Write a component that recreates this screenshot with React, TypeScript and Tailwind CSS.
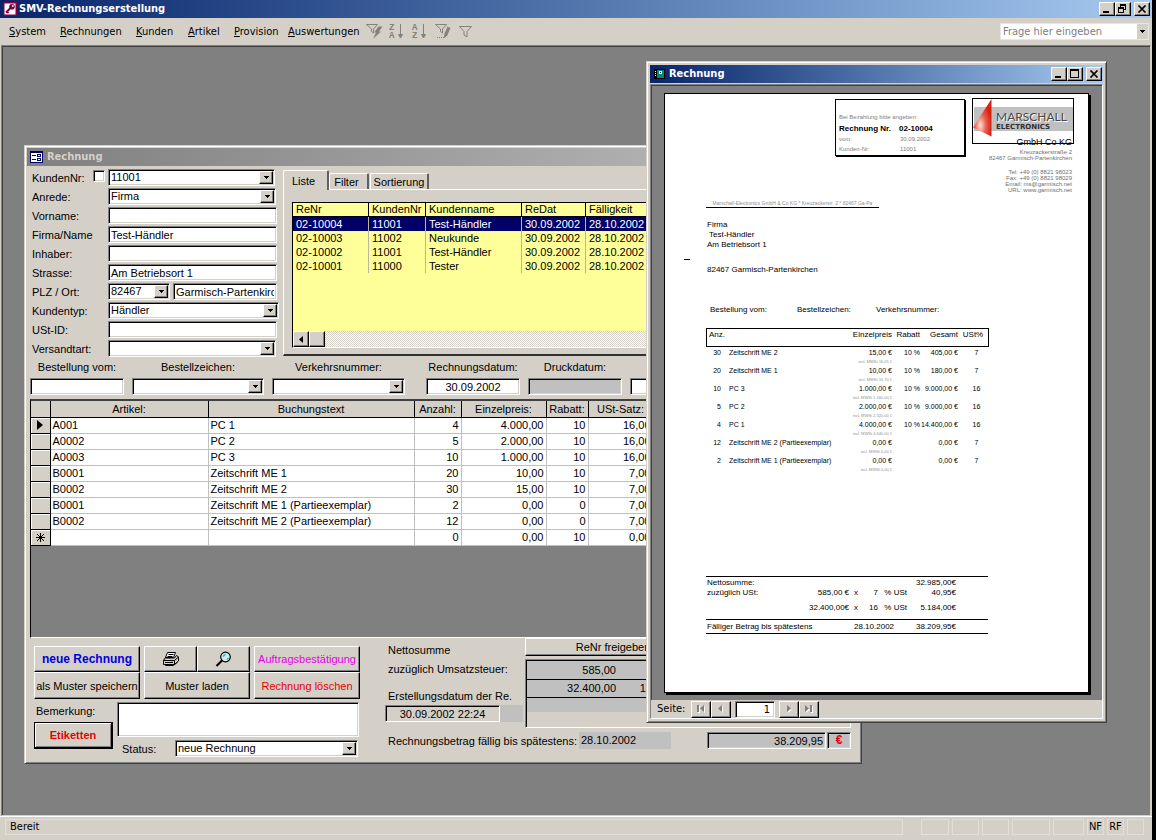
import React from 'react';

const UI = "font-['DejaVu_Sans_Condensed','DejaVu_Sans',sans-serif]";
const SUNKEN =
  'border border-t-[#808080] border-l-[#808080] border-b-white border-r-white shadow-[inset_1px_1px_0_#000,inset_-1px_-1px_0_#d4d0c8]';
const RAISED =
  'border border-t-white border-l-white border-b-black border-r-black bg-[#d4d0c8] shadow-[inset_-1px_-1px_0_#808080]';
const FRAME =
  'border border-t-[#d4d0c8] border-l-[#d4d0c8] border-b-[#404040] border-r-[#404040] bg-[#d4d0c8] shadow-[inset_1px_1px_0_#fff,inset_-1px_-1px_0_#808080]';

function Arrow() {
  return (
    <svg width="5" height="3" viewBox="0 0 5 3" shapeRendering="crispEdges" aria-hidden="true">
      <path d="M0 0h5v1H4v1H3v1H2V2H1V1H0z" fill="#000" />
    </svg>
  );
}

function TextField({ label, value = '', className = '', bg = 'bg-white' }: { label: string; value?: string; className?: string; bg?: string }) {
  return (
    <input
      aria-label={label}
      defaultValue={value}
      className={`block h-[17px] min-w-0 rounded-none px-[2px] text-[11px] leading-[15px] outline-none ${SUNKEN} ${bg} ${className}`}
    />
  );
}

function Combo({ label, value = '', className = '' }: { label: string; value?: string; className?: string }) {
  return (
    <div className={`relative h-[17px] bg-white p-px ${SUNKEN} ${className}`}>
      <select
        aria-label={label}
        defaultValue={value}
        className="block h-[13px] w-full appearance-none bg-transparent pl-px text-[11px] leading-[13px] outline-none"
      >
        <option value={value}>{value}</option>
      </select>
      <span className={`pointer-events-none absolute top-px right-px flex h-[13px] w-[14px] items-center justify-center ${RAISED}`}>
        <Arrow />
      </span>
    </div>
  );
}

function Field({ label, children }: { label: string; children: React.ReactNode }) {
  return (
    <div className="flex h-[17px] items-center">
      <span className="w-[76px] shrink-0">{label}</span>
      {children}
    </div>
  );
}

function WindowButtons({ middle }: { middle: 'restore' | 'max' }) {
  const cls = `flex h-[14px] w-4 items-center justify-center ${RAISED}`;
  return (
    <div className="flex items-center">
      <button aria-label="Minimieren" className={cls}>
        <svg width="12" height="10" viewBox="0 0 12 10" shapeRendering="crispEdges"><path d="M2 7h6v2H2z" /></svg>
      </button>
      <button aria-label={middle === 'max' ? 'Maximieren' : 'Wiederherstellen'} className={cls}>
        {middle === 'max' ? (
          <svg width="12" height="10" viewBox="0 0 12 10" shapeRendering="crispEdges">
            <path d="M1 0h9v9H1zM2 2v6h7V2z" fillRule="evenodd" />
          </svg>
        ) : (
          <svg width="12" height="10" viewBox="0 0 12 10" shapeRendering="crispEdges">
            <path d="M3 0h6v6H7V5h1V2H4v1H3zM1 3h6v6H1zM2 5v3h4V5z" fillRule="evenodd" />
          </svg>
        )}
      </button>
      <button aria-label="Schließen" className={`ml-[3px] ${cls}`}>
        <svg width="10" height="8" viewBox="0 0 10 8"><path d="M1.5 .5l7 7M8.5 .5l-7 7" stroke="#000" strokeWidth="1.7" /></svg>
      </button>
    </div>
  );
}

const MENU = [
  { name: 'System', w: 'w-[51px]' },
  { name: 'Rechnungen', w: 'w-[76px]' },
  { name: 'Kunden', w: 'w-[52px]' },
  { name: 'Artikel', w: 'w-[46px]' },
  { name: 'Provision', w: 'w-[54px]' },
  { name: 'Auswertungen', w: 'w-[78px]' },
];

function SortIcon({ top, bottom }: { top: string; bottom: string }) {
  return (
    <svg className="block" width="17" height="19" viewBox="0 0 17 19" aria-hidden="true">
      <text x="0" y="8" fontSize="9" fontWeight="bold" fontFamily="Liberation Mono, monospace" fill="#85827b">{top}</text>
      <text x="0" y="16" fontSize="9" fontWeight="bold" fontFamily="Liberation Mono, monospace" fill="#85827b">{bottom}</text>
      <path d="M11.500 2v10M9.500 12.500l2 3.500 2-3.500z" stroke="#85827b" fill="#85827b" />
    </svg>
  );
}

function MenuBar() {
  return (
    <div className={`flex h-[27px] items-center bg-[#d4d0c8] pr-[3px] pl-[9px] ${UI}`}>
      <nav className="flex">
        {MENU.map((m) => (
          <button key={m.name} className={`text-left whitespace-nowrap ${m.w}`}>
            <span className="underline underline-offset-1">{m.name[0]}</span>
            {m.name.slice(1)}
          </button>
        ))}
      </nav>
      <div className="flex items-center gap-[6px]">
        <button aria-label="Auswahlbasierter Filter">
          <svg width="17" height="17" viewBox="0 0 17 17">
            <path d="M.5 1.500h11l-4 4.500v4l-2-1.500V6z" fill="none" stroke="#85827b" />
            <path d="M12.500 3.500L8 9.500h2L7 16l8-7.500h-2l3.500-5z" fill="#85827b" />
          </svg>
        </button>
        <button aria-label="Absteigend sortieren"><SortIcon top="Z" bottom="A" /></button>
        <button aria-label="Aufsteigend sortieren"><SortIcon top="A" bottom="Z" /></button>
        <button aria-label="Formularbasierter Filter">
          <svg width="17" height="17" viewBox="0 0 17 17">
            <path d="M.5 1.500h11l-4 4.500v4l-2-1.500V6z" fill="none" stroke="#85827b" />
            <path d="M12.500 3.500l3 1.500-3.500 8-3 2 .2-3.500z" fill="#85827b" />
            <path d="M2 14.500h7" stroke="#85827b" strokeDasharray="1 1" />
          </svg>
        </button>
        <button aria-label="Filter anwenden">
          <svg width="16" height="17" viewBox="0 0 16 17">
            <path d="M1.500 3.500h12l-4.500 5v5.500l-3-2V8.500z" fill="none" stroke="#85827b" />
          </svg>
        </button>
      </div>
      <div className="ml-auto flex h-[17px] w-[149px] border border-[#e8e6e0] bg-white">
        <input
          aria-label="Frage hier eingeben"
          placeholder="Frage hier eingeben"
          className="w-[136px] min-w-0 bg-white px-[2px] text-[11px] outline-none placeholder:text-[#808080]"
        />
        <button aria-label="Fragen anzeigen" className="flex flex-1 items-center justify-center bg-[#d4d0c8]"><Arrow /></button>
      </div>
    </div>
  );
}

const LIST_ROWS = [
  ['02-10004', '11001', 'Test-Händler', '30.09.2002', '28.10.2002'],
  ['02-10003', '11002', 'Neukunde', '30.09.2002', '28.10.2002'],
  ['02-10002', '11001', 'Test-Händler', '30.09.2002', '28.10.2002'],
  ['02-10001', '11000', 'Tester', '30.09.2002', '28.10.2002'],
];

function InvoiceList() {
  return (
    <div className="flex h-[146px] flex-col border border-t-black border-l-black border-b-white border-r-white bg-[#ffff99]">
      <table className="w-full table-fixed border-separate border-spacing-0 text-[11px]">
        <colgroup>
          <col className="w-[76px]" /><col className="w-[57px]" /><col className="w-[96px]" /><col className="w-[64px]" /><col />
        </colgroup>
        <thead>
          <tr className="h-[14px]">
            {['ReNr', 'KundenNr', 'Kundenname', 'ReDat', 'Fälligkeit'].map((h) => (
              <th key={h} className="border-r border-b border-black p-0 pl-[3px] text-left leading-[13px] font-normal whitespace-nowrap last:border-r-0">{h}</th>
            ))}
          </tr>
        </thead>
        <tbody>
          {LIST_ROWS.map((r, i) => (
            <tr key={r[0]} className={i === 0 ? 'h-[14px] bg-[#000066] text-white' : 'h-[14px]'}>
              {r.map((c, j) => (
                <td key={j} className="border-r border-[#b8b8a0] p-0 pl-[3px] leading-[14px] last:border-r-0">{c}</td>
              ))}
            </tr>
          ))}
        </tbody>
      </table>
      <div className="mt-auto flex h-4 bg-[repeating-conic-gradient(#fff_0_25%,#d4d0c8_0_50%)] bg-[length:2px_2px]">
        <button aria-label="Nach links" className={`flex w-4 items-center justify-center ${RAISED}`}>
          <svg width="4" height="7" viewBox="0 0 4 7"><path d="M4 0v7L0 3.500z" /></svg>
        </button>
        <span className={`w-4 ${RAISED}`} />
      </div>
    </div>
  );
}

function TabPanel() {
  const tab = 'border-t border-l border-r-2 border-t-white border-l-white border-r-[#606060] bg-[#d4d0c8] rounded-t-[2px]';
  return (
    <div className="mt-px ml-1 flex min-w-0 flex-1 flex-col">
      <div className="flex items-end" role="tablist">
        <button role="tab" aria-selected="true" className={`relative z-10 -mb-px h-[20px] w-[46px] pr-1 ${tab}`}>Liste</button>
        <button role="tab" aria-selected="false" className={`h-[16px] w-[40px] pr-1 ${tab}`}>Filter</button>
        <button role="tab" aria-selected="false" className={`ml-px h-[16px] w-[59px] ${tab}`}>Sortierung</button>
      </div>
      <div className="border-t border-b-2 border-l border-t-white border-b-[#303030] border-l-white pt-[12px] pr-2 pb-[6px] pl-2">
        <InvoiceList />
      </div>
    </div>
  );
}

const ITEMS = [
  ['A001', 'PC 1', '4', '4.000,00', '10', '16,00'],
  ['A0002', 'PC 2', '5', '2.000,00', '10', '16,00'],
  ['A0003', 'PC 3', '10', '1.000,00', '10', '16,00'],
  ['B0001', 'Zeitschrift ME 1', '20', '10,00', '10', '7,00'],
  ['B0002', 'Zeitschrift ME 2', '30', '15,00', '10', '7,00'],
  ['B0001', 'Zeitschrift ME 1 (Partieexemplar)', '2', '0,00', '0', '7,00'],
  ['B0002', 'Zeitschrift ME 2 (Partieexemplar)', '12', '0,00', '0', '7,00'],
  ['', '', '0', '0,00', '10', '0,00'],
];

function ItemTable() {
  return (
    <div className="mx-[3px] mt-[4px] h-[239px] border-t-2 border-b border-l border-t-[#404040] border-b-white border-l-black bg-[#808080]">
      <table className="table-fixed border-collapse text-[11px] leading-[14px]">
        <colgroup>
          <col className="w-[19px]" /><col className="w-[158px]" /><col className="w-[206px]" /><col className="w-[47px]" />
          <col className="w-[85px]" /><col className="w-[42px]" /><col className="w-[65px]" />
        </colgroup>
        <thead>
          <tr className="h-[16px] bg-[#d4d0c8]">
            {['', 'Artikel:', 'Buchungstext', 'Anzahl:', 'Einzelpreis:', 'Rabatt:', 'USt-Satz:'].map((h, i) => (
              <th key={i} className="border-r border-b border-black p-0 text-center font-normal whitespace-nowrap">{h}</th>
            ))}
          </tr>
        </thead>
        <tbody>
          {ITEMS.map((r, i) => (
            <tr key={i} className="h-[16px] bg-white">
              <td className="border-r border-b border-black bg-[#d4d0c8] p-0 shadow-[inset_1px_1px_0_#fff]">
                <span className="flex items-center justify-center">
                  {i === 0 && <svg width="6" height="10" viewBox="0 0 6 10"><path d="M0 0v10L6 5z" /></svg>}
                  {i === ITEMS.length - 1 && (
                    <svg width="9" height="9" viewBox="0 0 9 9"><path d="M4.500 0v9M0 4.500h9M1 1l7 7M8 1L1 8" stroke="#000" /></svg>
                  )}
                </span>
              </td>
              {r.map((c, j) => (
                <td key={j} className={`border-r border-b border-[#c0c0c0] p-0 px-[2px] ${j > 1 ? 'text-right' : ''}`}>{c}</td>
              ))}
            </tr>
          ))}
        </tbody>
      </table>
    </div>
  );
}

function Captioned({ label, className, children }: { label: string; className: string; children: React.ReactNode }) {
  return (
    <div className={className}>
      <div className="h-[19px] text-center leading-[17px] whitespace-nowrap">{label}</div>
      {children}
    </div>
  );
}

function FormActions() {
  return (
    <div className="w-[326px] shrink-0">
      <div className="flex gap-1">
        <div className="flex w-[106px] flex-col">
          <button className={`h-[26px] text-[12px] font-bold text-[#0000dd] ${RAISED}`}>neue Rechnung</button>
          <button className={`h-[27px] whitespace-nowrap ${RAISED}`}>als Muster speichern</button>
        </div>
        <div className="flex w-[106px] flex-col">
          <div className="flex">
            <button aria-label="Drucken" className={`flex h-[26px] w-[53px] items-center justify-center ${RAISED}`}>
              <svg width="18" height="16" viewBox="0 0 18 16">
                <path d="M5.500 1.500h8l-2 5h-8z" fill="#fff" stroke="#000" />
                <path d="M6.500 3.500h5M5.500 5.500h5" stroke="#000" />
                <path d="M3.500 6.500l-2 3v4h11l4-3.500V6l-2-1.500-2 2.500h-9z" fill="#d4d0c8" stroke="#000" />
                <path d="M1.500 9.500h11v4M12.500 9.500l4-3.500M3 11.500h8M3.500 13.500v1h8l4-3.500" fill="none" stroke="#000" />
                <path d="M9 10.500h2" stroke="#cc0" />
              </svg>
            </button>
            <button aria-label="Seitenansicht" className={`flex h-[26px] w-[53px] items-center justify-center ${RAISED}`}>
              <svg width="17" height="16" viewBox="0 0 17 16">
                <circle cx="10.500" cy="6" r="4.800" fill="#d8e8e4" stroke="#000" strokeWidth="1.200" />
                <path d="M8 5.500l2.500-2.500M12 8.500l1.500-1.500" stroke="#0cc" strokeWidth="1.500" />
                <path d="M7 9.500L1.500 15" stroke="#000" strokeWidth="2.200" />
              </svg>
            </button>
          </div>
          <button className={`h-[27px] ${RAISED}`}>Muster laden</button>
        </div>
        <div className="flex w-[106px] flex-col">
          <button className={`h-[26px] whitespace-nowrap text-[#e800e8] ${RAISED}`}>Auftragsbestätigung</button>
          <button className={`h-[27px] whitespace-nowrap text-[#e80000] ${RAISED}`}>Rechnung löschen</button>
        </div>
      </div>
      <div className="mt-[3px] flex">
        <div className="w-[83px]">
          <label htmlFor="bemerkung" className="block h-5 pl-[2px] leading-[18px]">Bemerkung:</label>
          <button className="h-[27px] w-[79px] border border-r-2 border-b-2 border-black bg-[#d4d0c8] font-bold text-[#e80000] shadow-[inset_1px_1px_0_#fff,inset_-1px_-1px_0_#808080]">
            Etiketten
          </button>
        </div>
        <div className="flex-1">
          <textarea id="bemerkung" className={`block h-[35px] w-[242px] resize-none bg-white px-[2px] outline-none ${SUNKEN}`} />
          <div className="mt-[3px] flex items-center">
            <span className="w-[58px] pl-[5px]">Status:</span>
            <Combo label="Status" value="neue Rechnung" className="w-[183px]" />
          </div>
        </div>
      </div>
    </div>
  );
}

function Totals() {
  return (
    <div className="ml-[25px] flex-1 pr-[11px]">
      <div className="flex">
        <div className="w-[140px] pt-[3px] whitespace-nowrap">
          <div className="h-[19px] pl-[3px] leading-[19px]">Nettosumme</div>
          <div className="h-[19px] pl-[3px] leading-[19px]">zuzüglich Umsatzsteuer:</div>
          <div className="mt-2 h-[18px] pl-[3px] leading-[19px]">Erstellungsdatum der Re.</div>
          <div className="flex">
            <TextField label="Erstellungsdatum" value="30.09.2002 22:24" bg="bg-[#d4d0c8]" className="w-[115px] text-center" />
            <span className="w-[23px] bg-[#c0c0c0]" />
          </div>
        </div>
        <div className="min-w-0 flex-1">
          <button className={`block h-[18px] w-[176px] leading-[16px] ${RAISED}`}>ReNr freigeben</button>
          <div className={`mt-[3px] h-[69px] p-px ${SUNKEN}`}>
            <table className="w-full table-fixed border-collapse bg-[#c0c0c0]">
              <tbody>
                <tr className="h-[18px] border-b border-black">
                  <td className="w-[89px] p-0 text-right">585,00</td>
                  <td className="w-[36px] p-0 text-right">7</td>
                  <td className="p-0 pr-6 text-right">40,95</td>
                </tr>
                <tr className="h-[18px] border-b border-black">
                  <td className="p-0 text-right">32.400,00</td>
                  <td className="p-0 text-right">16</td>
                  <td className="p-0 pr-6 text-right">5.184,00</td>
                </tr>
                <tr className="h-[15px]"><td colSpan={3} className="p-0" /></tr>
              </tbody>
            </table>
          </div>
        </div>
      </div>
      <div className="mt-1 flex items-center">
        <span className="w-[194px] pl-[3px] whitespace-nowrap">Rechnungsbetrag fällig bis spätestens:</span>
        <span className="h-[17px] w-[92px] bg-[#c0c0c0] pl-[2px] leading-[17px]">28.10.2002</span>
        <TextField label="Rechnungsbetrag" value="38.209,95" bg="bg-[#c0c0c0]" className="ml-9 w-[119px] text-right" />
        <button aria-label="Euro" className={`ml-px h-[17px] w-[24px] bg-[#c0c0c0] text-[12px] leading-[15px] font-bold text-[#e80000] ${SUNKEN}`}>€</button>
      </div>
    </div>
  );
}

function FormWindow() {
  return (
    <section className={`absolute top-[99px] left-[22px] w-[838px] p-[2px] pb-[6px] ${FRAME}`}>
      <header className={`flex h-[18px] items-center bg-linear-to-r from-[#808080] to-[#c0c0c0] pl-[3px] font-bold text-[#d4d0c8] ${UI}`}>
        <svg width="13" height="12" viewBox="0 0 13 12" shapeRendering="crispEdges" aria-hidden="true">
          <path d="M0 0h13v12H0z" fill="#000060" /><path d="M1 2h11v9H1z" fill="#fff" />
          <path d="M2 4h4v1H2zM2 8h4v1H2zM7 3h4v3H7zM7 7h4v3H7z" fill="#000060" />
          <path d="M8 4h2v1H8zM8 8h2v1H8z" fill="#fff" />
        </svg>
        <span className="ml-1">Rechnung</span>
      </header>
      <div className="flex pt-[3px] pl-[5px]">
        <div className="flex w-[247px] shrink-0 flex-col gap-[2px]">
          <div className="flex h-[17px] items-center">
            <label htmlFor="kunde" className="w-[61px]">KundenNr:</label>
            <input id="kunde" type="checkbox" className={`mr-[3px] mb-1 h-3 w-3 appearance-none bg-white ${SUNKEN}`} />
            <Combo label="KundenNr" value="11001" className="w-[167px]" />
          </div>
          <Field label="Anrede:"><Combo label="Anrede" value="Firma" className="w-[168px]" /></Field>
          <Field label="Vorname:"><TextField label="Vorname" className="w-[169px]" /></Field>
          <Field label="Firma/Name"><TextField label="Firma/Name" value="Test-Händler" className="w-[169px]" /></Field>
          <Field label="Inhaber:"><TextField label="Inhaber" className="w-[169px]" /></Field>
          <Field label="Strasse:"><TextField label="Strasse" value="Am Betriebsort 1" className="w-[169px]" /></Field>
          <Field label="PLZ / Ort:">
            <Combo label="PLZ" value="82467" className="w-[62px]" />
            <TextField label="Ort" value="Garmisch-Partenkirchen" className="ml-[3px] w-[104px]" />
          </Field>
          <Field label="Kundentyp:"><Combo label="Kundentyp" value="Händler" className="w-[171px]" /></Field>
          <Field label="USt-ID:"><TextField label="USt-ID" className="w-[169px]" /></Field>
          <Field label="Versandtart:"><Combo label="Versandart" className="w-[168px]" /></Field>
        </div>
        <TabPanel />
      </div>
      <div className="mt-[2px] flex gap-2 pl-[3px]">
        <Captioned label="Bestellung vom:" className="w-[94px]"><TextField label="Bestellung vom" className="w-full" /></Captioned>
        <Captioned label="Bestellzeichen:" className="w-[132px]"><Combo label="Bestellzeichen" /></Captioned>
        <Captioned label="Verkehrsnummer:" className="w-[133px]"><Combo label="Verkehrsnummer" /></Captioned>
        <Captioned label="Rechnungsdatum:" className="ml-[13px] w-[94px]"><TextField label="Rechnungsdatum" value="30.09.2002" className="w-full text-center" /></Captioned>
        <Captioned label="Druckdatum:" className="w-[94px]"><TextField label="Druckdatum" bg="bg-[#c0c0c0]" className="w-full" /></Captioned>
        <Captioned label="" className="w-[94px]"><TextField label="Zahlung" className="w-full" /></Captioned>
      </div>
      <ItemTable />
      <div className="flex pl-[7px]">
        <div className="pt-2"><FormActions /></div>
        <Totals />
      </div>
    </section>
  );
}

const POSITIONS = [
  ['30', 'Zeitschrift ME 2', '15,00 €', '10 %', '405,00 €', '7', '16,05'],
  ['20', 'Zeitschrift ME 1', '10,00 €', '10 %', '180,00 €', '7', '10,70'],
  ['10', 'PC 3', '1.000,00 €', '10 %', '9.000,00 €', '16', '1.160,00'],
  ['5', 'PC 2', '2.000,00 €', '10 %', '9.000,00 €', '16', '2.320,00'],
  ['4', 'PC 1', '4.000,00 €', '10 %', '14.400,00 €', '16', '4.640,00'],
  ['12', 'Zeitschrift ME 2 (Partieexemplar)', '0,00 €', '', '0,00 €', '7', '0,00'],
  ['2', 'Zeitschrift ME 1 (Partieexemplar)', '0,00 €', '', '0,00 €', '7', '0,00'],
];

function Logo() {
  return (
    <svg className="block" width="102" height="46" viewBox="0 0 102 46" role="img" aria-label="Marschall Electronics">
      <defs>
        <radialGradient id="cone" cx="0.4" cy="0.7" r="0.6">
          <stop offset="0" stopColor="#ffe0d8" />
          <stop offset="0.5" stopColor="#e86050" />
          <stop offset="1" stopColor="#d82010" />
        </radialGradient>
      </defs>
      <rect x="0.500" y="0.500" width="101" height="45" fill="#fff" stroke="#000" />
      <rect x="2" y="9" width="99" height="24" fill="#c0c0c0" />
      <path d="M19.500 1v37.500L1 29.500z" fill="url(#cone)" />
      <text x="25" y="24" fontSize="12" fontFamily="Lato, sans-serif" fill="#fff">MARSCHALL</text>
      <text x="24" y="23" fontSize="12" fontFamily="Lato, sans-serif" fill="#484848">MARSCHALL</text>
      <text x="24" y="31" fontSize="7" fontWeight="bold" fontFamily="DejaVu Sans, sans-serif" fill="#303030">ELECTRONICS</text>
    </svg>
  );
}

function Paper() {
  return (
    <div className="h-[600px] w-[425px] border border-black bg-white text-[8px] leading-[10px] whitespace-nowrap shadow-[2px_2px_0_#000]">
      <div className="flex justify-end gap-[7px] pt-1 pr-[14px]">
        <div className="mt-px h-[57px] w-[130px] border border-black pt-[12px] pl-[3px] shadow-[1px_1px_0_#000]">
          <div className="text-[6px] text-[#808080]">Bei Bezahlung bitte angeben:</div>
          <div className="flex pt-[2px]"><span className="w-[60px] font-bold">Rechnung Nr.</span><span className="font-bold">02-10004</span></div>
          <div className="flex text-[6px] text-[#808080]"><span className="w-[61px]">vom:</span>30.09.2002</div>
          <div className="flex text-[6px] text-[#808080]"><span className="w-[61px]">Kunden-Nr:</span>11001</div>
        </div>
        <div className="w-[102px] text-right text-[6px] leading-[6px] text-[#707070]">
          <Logo />
          <div className="relative -mt-[7px] pr-[2px] text-[9px] leading-[10px] text-black">GmbH Co KG</div>
          <div className="mt-[2px] flex flex-col items-end pr-[2px]">
            <span>Kreuzackerstraße 2</span>
            <span>82467 Garmisch-Partenkirchen</span>
          </div>
          <div className="mt-2 pr-[2px]">
            <div>Tel: +49 (0) 8821 98023</div>
            <div>Fax: +49 (0) 8821 98029</div>
            <div>Email: ms@garmisch.net</div>
            <div>URL: www.garmisch.net</div>
          </div>
        </div>
      </div>
      <div className="mt-[6px] ml-[41px] w-[173px] border-b border-black text-center text-[5px] leading-[8px] text-[#909090]">
        Marschall-Electronics GmbH &amp; Co KG * Kreuzackerstr. 2 * 82467 Ga-Pa
      </div>
      <div className="mt-3 ml-[42px]">
        <div>Firma</div>
        <div className="pl-[2px]">Test-Händler</div>
        <div>Am Betriebsort 1</div>
      </div>
      <div className="mt-[9px] ml-[19px] h-px w-[6px] bg-black" />
      <div className="mt-[5px] ml-[42px]">82467 Garmisch-Partenkirchen</div>
      <div className="mt-[30px] ml-[45px] flex">
        <span className="w-[87px]">Bestellung vom:</span>
        <span className="w-[79px]">Bestellzeichen:</span>
        <span>Verkehrsnummer:</span>
      </div>
      <table className="mt-[13px] ml-[41px] w-[283px] table-fixed border-separate border-spacing-0">
        <colgroup>
          <col className="w-[23px]" /><col className="w-[106px]" /><col className="w-[57px]" /><col className="w-[28px]" /><col className="w-[38px]" /><col className="w-[31px]" />
        </colgroup>
        <thead>
          <tr className="h-[19px] align-top">
            <th className="border-y border-l border-black p-0 pt-px pl-[2px] text-left font-normal">Anz.</th>
            <th className="border-y border-black p-0" />
            <th className="border-y border-black p-0 pt-px text-right font-normal">Einzelpreis</th>
            <th className="border-y border-black p-0 pt-px text-right font-normal">Rabatt</th>
            <th className="border-y border-black p-0 pt-px text-right font-normal">Gesamt</th>
            <th className="border-y border-r border-black p-0 pt-px text-center font-normal">USt%</th>
          </tr>
        </thead>
        <tbody className="text-[7px] leading-[12px]">
          {POSITIONS.map((p, i) => (
            <tr key={i} className="h-[18px] align-top">
              <td className="p-0 pr-2 text-right">{p[0]}</td>
              <td className="p-0">{p[1]}</td>
              <td className="p-0 text-right">
                {p[2]}
                <div className="text-[4px] leading-[6px] text-[#909090]">incl. MWSt {p[6]} €</div>
              </td>
              <td className="p-0 text-right">{p[3]}</td>
              <td className="p-0 text-right">{p[4]}</td>
              <td className="p-0 pl-[6px] text-center">{p[5]}</td>
            </tr>
          ))}
        </tbody>
      </table>
      <div className="mt-[103px] ml-[41px] w-[282px] border-y border-black">
        <div className="grid grid-cols-[102px_40px_9px_20px_29px_49px] pt-px pb-[6px] pl-px text-right">
          <span className="text-left">Nettosumme:</span><span /><span /><span /><span /><span>32.985,00€</span>
          <span className="text-left">zuzüglich USt:</span><span>585,00 €</span><span>x</span><span>7</span><span>% USt</span><span>40,95€</span>
          <span /><span className="pt-[5px]">32.400,00€</span><span className="pt-[5px]">x</span><span className="pt-[5px]">16</span><span className="pt-[5px]">% USt</span><span className="pt-[5px]">5.184,00€</span>
        </div>
        <div className="flex border-t border-black pt-[2px] pb-px pl-px">
          <span className="w-[147px]">Fälliger Betrag bis spätestens</span>
          <span className="w-[40px]">28.10.2002</span>
          <span className="w-[62px] text-right">38.209,95€</span>
        </div>
      </div>
    </div>
  );
}

function NavButton({ label, path }: { label: string; path: string }) {
  return (
    <button aria-label={label} className={`flex h-[17px] w-[20px] items-center justify-center ${RAISED}`}>
      <svg width="10" height="8" viewBox="0 0 10 8"><path d={path} transform="translate(1 1)" fill="#fff" /><path d={path} fill="#808080" /></svg>
    </button>
  );
}

function PreviewWindow() {
  return (
    <section className={`absolute top-[15px] left-[644px] w-[461px] p-[3px] ${FRAME}`}>
      <header className={`flex h-[18px] items-center bg-linear-to-r from-[#0a246a] to-[#a6caf0] pr-px pl-1 font-bold text-white ${UI}`}>
        <svg width="11" height="12" viewBox="0 0 11 12" shapeRendering="crispEdges" aria-hidden="true">
          <path d="M0 1h11v10H0z" fill="#000" />
          <path d="M3 2h7v8H3z" fill="#088" />
          <path d="M1 3h1v1H1zM1 5h1v1H1zM1 7h1v1H1zM5 3h3v3H5z" fill="#fff" />
          <path d="M6 4h1v1H6z" fill="#000" />
        </svg>
        <span className="ml-1 flex-1">Rechnung</span>
        <WindowButtons middle="max" />
      </header>
      <div className="mt-px border border-t-[#808080] border-l-[#808080] border-b-white border-r-white">
        <div className="border-t border-l border-[#404040] bg-[#808080] pt-[7px] pb-[7px] pl-3"><Paper /></div>
        <div className={`flex h-[18px] items-center pl-[6px] ${UI}`}>
          <label htmlFor="seite" className="w-[34px]">Seite:</label>
          <NavButton label="Erste Seite" path="M1 0h2v7H1zM8 0v7L4 3.500z" />
          <NavButton label="Vorige Seite" path="M6 0v7L2 3.500z" />
          <input id="seite" defaultValue="1" className={`mx-1 h-[17px] w-[40px] bg-white px-1 text-right outline-none ${SUNKEN}`} />
          <NavButton label="Nächste Seite" path="M3 0v7l4-3.500z" />
          <NavButton label="Letzte Seite" path="M1 0v7l4-3.500zM6 0h2v7H6z" />
        </div>
      </div>
    </section>
  );
}

function StatusBar() {
  const cell = 'h-[16px] border border-[#e2dfd9] text-center leading-[14px]';
  return (
    <footer className={`flex h-[24px] items-start border-t border-white bg-[#d4d0c8] pt-[2px] pr-2 pl-[5px] ${UI}`}>
      <span className={`flex-1 pl-1 !text-left ${cell}`}>Bereit</span>
      <span className={`ml-[18px] w-[28px] ${cell}`} />
      <span className={`ml-[3px] w-[27px] ${cell}`} />
      <span className={`ml-[3px] w-[27px] ${cell}`} />
      <span className={`ml-[3px] w-[38px] ${cell}`} />
      <span className={`ml-[3px] w-[31px] ${cell}`} />
      <span className={`ml-[3px] w-[17px] ${cell}`}>NF</span>
      <span className={`ml-[3px] w-[17px] ${cell}`}>RF</span>
      <span className={`ml-[3px] w-[17px] ${cell}`} />
    </footer>
  );
}

export default function App() {
  return (
    <div className="h-screen min-h-[780px] bg-black pr-1 font-['Liberation_Sans',Arial,sans-serif] text-[11px] leading-[14px] text-black">
      <div className="flex h-full flex-col bg-[#d4d0c8]">
        <header className={`flex h-[18px] shrink-0 items-center bg-linear-to-r from-[#0a246a] to-[#a6caf0] pr-[2px] pl-[3px] font-bold text-white ${UI}`}>
          <svg width="14" height="14" viewBox="0 0 14 14" aria-hidden="true">
            <path d="M0 0h14v14H0z" fill="#800040" /><path d="M1.500 1.500h11v11h-11z" fill="#fff" />
            <circle cx="9" cy="4.800" r="2.800" fill="#800040" /><circle cx="9.800" cy="4" r="0.900" fill="#fff" />
            <path d="M7.500 6L3 10.500M4 9.500l1.500 1.500" stroke="#800040" strokeWidth="1.800" />
          </svg>
          <h1 className="ml-[2px] flex-1">SMV-Rechnungserstellung</h1>
          <WindowButtons middle="restore" />
        </header>
        <MenuBar />
        <main className="relative mr-px ml-px min-h-0 flex-1 overflow-hidden border border-t-[#808080] border-l-[#808080] border-b-[#d4d0c8] border-r-[#d4d0c8] bg-[#808080] shadow-[inset_1px_1px_0_#404040]">
          <FormWindow />
          <PreviewWindow />
        </main>
        <StatusBar />
      </div>
    </div>
  );
}
